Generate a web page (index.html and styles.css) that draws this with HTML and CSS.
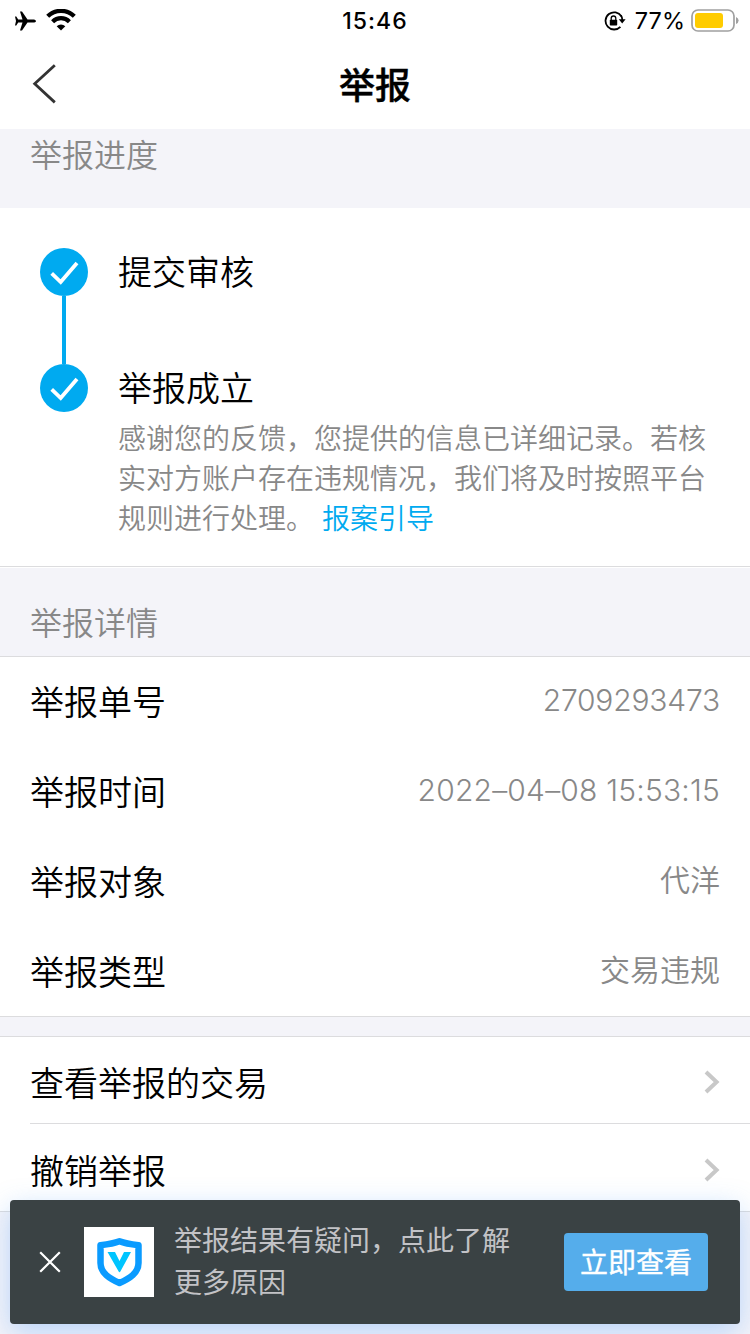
FILE: index.html
```html
<!DOCTYPE html>
<html lang="zh-CN">
<head>
<meta charset="utf-8">
<title>举报</title>
<link rel="stylesheet" href="styles.css">
</head>
<body>
<div class="screen">
  <div class="status">
    <div class="status-left">
      <svg class="plane" width="22" height="20" viewBox="0 0 22 20"><path d="M22 10C22 9 20.500 8.400 19 8.400H13.500L8 .5H6L8.500 8.400H4.200L2.300 5.500H1L2 10L1 14.500H2.300L4.200 11.600H8.500L6 19.500H8L13.500 11.600H19C20.500 11.600 22 11 22 10Z"/></svg>
      <svg class="wifi" width="30" height="22" viewBox="0 0 30 22"><path d="M1.700 7.300A18.800 18.800 0 0 1 28.300 7.300" fill="none" stroke="#000" stroke-width="4.200"/><path d="M6.600 12.700A11.800 11.800 0 0 1 23.400 12.700" fill="none" stroke="#000" stroke-width="4.200"/><path d="M10.700 17.200A6.200 6.200 0 0 1 19.300 17.200L15 21.600Z"/></svg>
    </div>
    <div class="status-time">15:46</div>
    <div class="status-right">
      <svg class="lock" width="22" height="20" viewBox="0 0 22 20"><path d="M17.400 5.300A8.600 8.600 0 1 0 16.400 15.800" fill="none" stroke="#000" stroke-width="1.800"/><path d="M17 4.600Q18.300 6.500 18.300 9" fill="none" stroke="#000" stroke-width="1.800"/><path d="M14.800 8.200H21.600L18.200 12.400Z"/><rect x="5.800" y="8.700" width="7.400" height="5.800" rx=".8"/><path d="M7.200 9V7.300A2.300 2.300 0 0 1 11.800 7.300V9" fill="none" stroke="#000" stroke-width="1.300"/></svg>
      <span class="percent">77%</span>
      <svg class="battery" width="48" height="24" viewBox="0 0 48 24"><rect x="1" y="1" width="42" height="21" rx="6" fill="none" stroke="#a0a0a0" stroke-width="1.700"/><rect x="4" y="4" width="28" height="15" rx="3" fill="#ffcc00"/><path d="M45 8Q47.600 9 47.600 11.500T45 15Z" fill="#a0a0a0"/></svg>
    </div>
  </div>
  <header class="nav">
    <svg class="back" width="24" height="40" viewBox="0 0 24 40"><path d="M22.800 1.200L2.700 19.800L22.800 38.400" fill="none" stroke="#333" stroke-width="2.800"/></svg>
    <h1 class="title">举报</h1>
  </header>
  <h2 class="section section-progress">举报进度</h2>
  <section class="steps">
    <div class="step step-first">
      <div class="rail">
        <svg class="dot" width="48" height="48" viewBox="0 0 48 48"><circle cx="24" cy="24" r="24" fill="#00aaf0"/><path d="M11.700 25.300L20.700 34L37 15" fill="none" stroke="#fff" stroke-width="3.800"/></svg>
        <div class="connector"></div>
      </div>
      <h3 class="step-title">提交审核</h3>
    </div>
    <div class="step">
      <div class="rail">
        <svg class="dot" width="48" height="48" viewBox="0 0 48 48"><circle cx="24" cy="24" r="24" fill="#00aaf0"/><path d="M11.700 25.300L20.700 34L37 15" fill="none" stroke="#fff" stroke-width="3.800"/></svg>
      </div>
      <div class="step-body">
        <h3 class="step-title">举报成立</h3>
        <p class="desc">感谢您的反馈，您提供的信息已详细记录。若核<br>实对方账户存在违规情况，我们将及时按照平台<br>规则进行处理。<a class="link">报案引导</a></p>
      </div>
    </div>
  </section>
  <h2 class="section section-detail">举报详情</h2>
  <section class="details">
    <div class="row"><span>举报单号</span><span class="value number">2709293473</span></div>
    <div class="row"><span>举报时间</span><span class="value number date">2022–04–08 15:53:15</span></div>
    <div class="row"><span>举报对象</span><span class="value">代洋</span></div>
    <div class="row"><span>举报类型</span><span class="value">交易违规</span></div>
  </section>
  <section class="actions">
    <div class="action"><span>查看举报的交易</span><svg class="chevron" width="16" height="24" viewBox="0 0 16 24"><path d="M2 2L12.600 12L2 22" fill="none" stroke="#c8c8c8" stroke-width="4"/></svg></div>
    <div class="action action-last"><span>撤销举报</span><svg class="chevron" width="16" height="24" viewBox="0 0 16 24"><path d="M2 2L12.600 12L2 22" fill="none" stroke="#c8c8c8" stroke-width="4"/></svg></div>
  </section>
  <aside class="toast">
    <svg class="close" width="22" height="22" viewBox="0 0 22 22"><path d="M1.200 1.200L20.800 20.800M20.800 1.200L1.200 20.800" stroke="#fff" stroke-width="2.200"/></svg>
    <svg class="shield" width="70" height="70" viewBox="0 0 70 70"><rect width="70" height="70" fill="#fff"/><path d="M35.500 14.200C41 16.400 46 17.200 54.500 18.200V36C54.500 46 45.500 51.500 35.500 56C25.500 51.500 16.500 46 16.500 36V18.200C25 17.200 30 16.400 35.500 14.200Z" fill="#fff" stroke="#0a9bff" stroke-width="6.500" stroke-linejoin="round"/><path d="M23.500 25H31L35.500 34L40 25H47L36.500 44.300Q35.500 46 34.500 44.300Z" fill="#00c5ff"/></svg>
    <p class="toast-text">举报结果有疑问，点此了解<br>更多原因</p>
    <button class="toast-button">立即查看</button>
  </aside>
</div>
</body>
</html>
```
FILE: styles.css
```css
* { box-sizing: border-box; }
body, h1, h2, h3, p { margin: 0; font-weight: 350; }
body { font-family: "Noto Sans CJK SC", sans-serif; color: #000; background: #f4f4f9; }
.screen { position: relative; width: 750px; height: 1334px; overflow: hidden; background: #f4f4f9; }
.status { display: grid; grid-template-columns: 1fr 68px 1fr; align-items: center; height: 40px; padding: 0 11px 0 14px; background: #fff; }
.status-left, .status-right { display: flex; align-items: center; }
.wifi { margin-left: 10px; margin-top: -1px; }
.status-time { margin-left: -3px; text-align: center; white-space: nowrap; font: 500 23px/40px Inter, sans-serif; letter-spacing: 1px; }
.status-right { justify-content: flex-end; }
.lock { margin-top: 1px; }
.percent { margin: 0 6px 0 9px; padding-top: 1px; font: 400 23.5px/40px Inter, sans-serif; }
.nav { display: grid; grid-template-columns: 1fr auto 1fr; align-items: center; height: 89px; padding: 0 32px; background: #fff; }
.back { margin-top: -1px; }
.title { margin-top: -4px; font-size: 36px; line-height: 52px; font-weight: 500; -webkit-text-stroke: 0.4px #000; }
.section { padding-left: 30px; font-size: 32px; line-height: 48px; color: #888; }
.section-progress { height: 79px; }
.section-detail { height: 89px; padding-top: 29px; border-top: 1px solid #fff; }
.steps { height: 359px; padding: 40px 40px 0; background: #fff; border-bottom: 1px solid #dcdcde; }
.step { display: flex; gap: 30px; }
.step-first { height: 116px; }
.rail { display: flex; flex-direction: column; align-items: center; width: 48px; }
.dot { flex: none; }
.connector { flex: 1; width: 4px; background: #00aaf0; }
.step-title { font-size: 34px; line-height: 46px; }
.desc { margin-top: 7px; font-size: 28px; line-height: 40px; color: #888; white-space: nowrap; }
.link { margin-left: 8px; color: #00aaf0; }
.details { border-top: 1px solid #dcdcde; border-bottom: 1px solid #dcdcde; background: #fff; height: 361px; }
.row { display: flex; align-items: center; justify-content: space-between; height: 90px; padding: 0 30px 3px; font-size: 34px; }
.value { font-size: 30px; color: #888; padding-bottom: 5px; }
.number { padding-bottom: 1px; font-family: Inter, "Noto Sans CJK SC", sans-serif; font-weight: 350; letter-spacing: -0.2px; }
.date { letter-spacing: 0.2px; }
.actions { margin-top: 19px; padding-left: 30px; background: #fff; border-top: 1px solid #dcdcde; border-bottom: 1px solid #dcdcde; }
.action { display: flex; align-items: center; justify-content: space-between; height: 87px; padding-right: 30px; border-bottom: 1px solid #dcdcde; font-size: 34px; line-height: 48px; padding-top: 4px; }
.action-last { border-bottom: 0; }
.toast { position: absolute; left: 10px; bottom: 10px; display: flex; align-items: center; width: 730px; height: 124px; padding: 0 32px 0 29px; border-radius: 4px; background: #3a4244; box-shadow: 0 8px 28px rgba(70, 150, 250, 0.34); }
.shield { margin-left: 23px; }
.toast-text { margin: -5px 0 0 20px; font-size: 28px; line-height: 42px; color: #c2c2c6; font-weight: 400; white-space: nowrap; }
.toast-button { margin-left: auto; width: 144px; height: 58px; padding: 0 0 3px; border: 0; border-radius: 4px; background: #55adeb; color: #fff; font: 400 28px/54px "Noto Sans CJK SC", sans-serif; -webkit-text-stroke: 0.4px #fff; }
```
